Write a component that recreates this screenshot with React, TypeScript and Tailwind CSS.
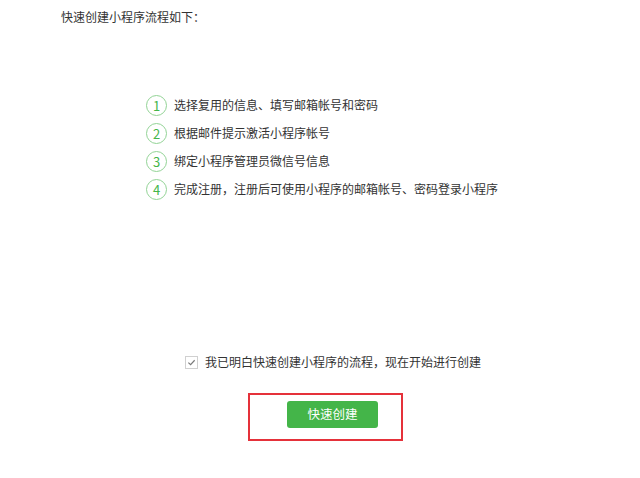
import React, { useState } from "react";

const steps = [
    "选择复用的信息、填写邮箱帐号和密码",
    "根据邮件提示激活小程序帐号",
    "绑定小程序管理员微信号信息",
    "完成注册，注册后可使用小程序的邮箱帐号、密码登录小程序",
];

export default function App() {
    const [agreed, setAgreed] = useState(true);

    return (
        <div
            className="w-[640px] h-[478px] bg-white text-[#333333] text-[12px] overflow-hidden"
            style={{ fontFamily: '"Microsoft YaHei", "Noto Sans CJK SC", sans-serif' }}
        >
            {/* Title */}
            <div className="pl-[61px] pt-[9px] leading-[16px] text-[12px]">快速创建小程序流程如下：</div>

            {/* Steps */}
            <ol className="pl-[146px] pt-[70px] flex flex-col gap-[8px]">
                {steps.map((s, i) => (
                    <li key={i} className="flex items-center h-[20px]">
                        <span className="w-[21px] h-[21px] rounded-full border-[1.5px] border-[#92d395] text-[#44b549] flex items-center justify-center text-[13px] leading-none">
                            {i + 1}
                        </span>
                        <span className="ml-[7px] leading-[20px]">{s}</span>
                    </li>
                ))}
            </ol>

            {/* Agreement */}
            <label className="flex items-center ml-[185px] mt-[155px] h-[16px] cursor-pointer select-none">
                <span
                    onClick={() => setAgreed(!agreed)}
                    className="w-[13px] h-[13px] border border-[#d0d0d0] bg-white flex items-center justify-center"
                >
                    {agreed && (
                        <svg width="9" height="9" viewBox="0 0 10 10" fill="none">
                            <path d="M1.5 5.2 L4 7.5 L8.5 2.5" stroke="#7a7a7a" strokeWidth="1.3" />
                        </svg>
                    )}
                </span>
                <span className="ml-[7px]">我已明白快速创建小程序的流程，现在开始进行创建</span>
            </label>

            {/* Create button, highlighted */}
            <div className="ml-[248px] mt-[23px] w-[155px] h-[48px] border-2 border-[#e5313a] pl-[37px] pt-[6px]">
                <button className="w-[91px] h-[27px] rounded-[3px] bg-[#44b549] text-white text-[12.5px] leading-none">
                    快速创建
                </button>
            </div>
        </div>
    );
}
